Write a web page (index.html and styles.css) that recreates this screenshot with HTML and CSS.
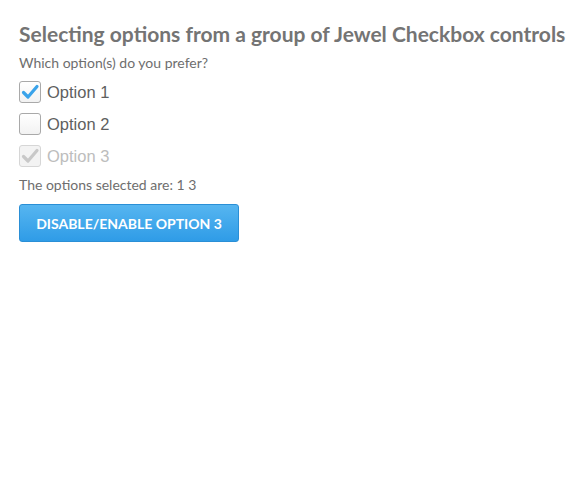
FILE: index.html
```html
<!DOCTYPE html>
<html>
<head>
<meta charset="utf-8">
<link rel="stylesheet" href="styles.css">
</head>
<body>
<div class="page">
  <h1 class="title">Selecting options from a group of Jewel Checkbox controls</h1>
  <p class="prompt">Which option(s) do you prefer?</p>
  <div class="options">
    <label class="opt">
      <span class="box checked"><svg viewBox="0 0 22 22" width="22" height="22"><path d="M4.5 11.5 L9 16 L18 5.5" fill="none" stroke="#3aa3ea" stroke-width="3.2" stroke-linecap="round" stroke-linejoin="round"/></svg></span>
      <span class="lbl">Option 1</span>
    </label>
    <label class="opt">
      <span class="box"></span>
      <span class="lbl">Option 2</span>
    </label>
    <label class="opt disabled">
      <span class="box checked"><svg viewBox="0 0 22 22" width="22" height="22"><path d="M4.5 11.5 L9 16 L18 5.5" fill="none" stroke="#c8c8c8" stroke-width="3.2" stroke-linecap="round" stroke-linejoin="round"/></svg></span>
      <span class="lbl">Option 3</span>
    </label>
  </div>
  <p class="result">The options selected are: 1 3</p>
  <button class="btn">DISABLE/ENABLE OPTION 3</button>
</div>
</body>
</html>
```
FILE: styles.css
```css
html, body { margin: 0; padding: 0; background: #fff; }
.page {
  padding: 20px 10px 20px 19px;
  font-family: Lato, "Liberation Sans", sans-serif;
  color: #757575;
}
.title {
  margin: 0;
  font-size: 21px;
  font-weight: 700;
  line-height: 28px;
  color: #747474;
  white-space: nowrap;
}
.prompt {
  margin: 6px 0 0;
  font-size: 14px;
  line-height: 18px;
  color: #6e6e6e;
}
.options {
  display: flex;
  flex-direction: column;
  gap: 10px;
  margin-top: 9px;
}
.opt {
  display: flex;
  align-items: center;
  gap: 6px;
  height: 22px;
}
.box {
  box-sizing: border-box;
  width: 22px;
  height: 22px;
  border: 1px solid #a9a9a9;
  border-radius: 3px;
  background: linear-gradient(#ffffff, #f2f2f2);
  position: relative;
}
.box svg { position: absolute; left: -1px; top: -1px; }
.lbl {
  font-family: "Liberation Sans", Arial, sans-serif;
  font-size: 16.5px;
  color: #5f5f5f;
}
.disabled .box { border-color: #d6d6d6; background: #f3f3f3; }
.disabled .lbl { color: #bdbdbd; }
.result {
  margin: 9px 0 0;
  font-size: 14px;
  line-height: 18px;
  color: #6e6e6e;
}
.btn {
  display: block;
  margin-top: 10px;
  width: 220px;
  height: 38px;
  border: 1px solid #2a8fd6;
  border-radius: 3px;
  background: linear-gradient(#56b5f0, #2f9ce7);
  color: #fff;
  font-family: Lato, "Liberation Sans", sans-serif;
  font-weight: 700;
  font-size: 14px;
  letter-spacing: 0;
  padding: 0;
}
```
